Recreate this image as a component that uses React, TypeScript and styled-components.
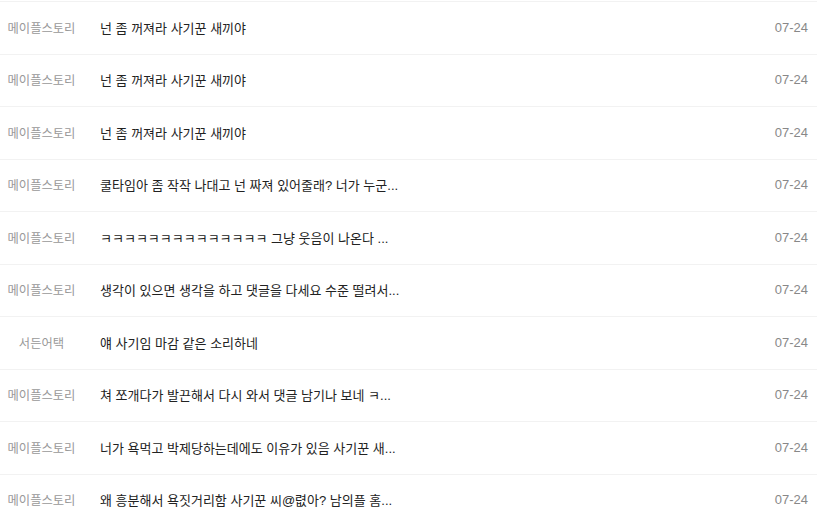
import * as React from 'react';
import styled, { createGlobalStyle } from 'styled-components';

const GlobalStyle = createGlobalStyle`
  html, body {
    margin: 0;
    padding: 0;
    background: #ffffff;
  }
  body {
    font-family: "Liberation Sans", "Noto Sans CJK KR", sans-serif;
  }
`;

const List = styled.ul`
  list-style: none;
  margin: 0;
  padding: 1px 0 0;
`;

const Row = styled.li`
  display: flex;
  align-items: center;
  height: 52.5px;
  box-sizing: border-box;
  border-top: 1px solid #f2f2f2;
  padding: 0 9px 1px 0;
  font-size: 13px;
`;

const Category = styled.span`
  flex: 0 0 83px;
  text-align: center;
  color: #999999;
  font-size: 12.3px;
  margin-right: 17px;
  padding-top: 1px;
  white-space: nowrap;
`;

const Title = styled.span`
  flex: 1;
  color: #222222;
  white-space: nowrap;
  overflow: hidden;
`;

const DateText = styled.span`
  color: #888888;
  font-size: 13px;
`;

const posts = [
  { cat: '메이플스토리', title: '넌 좀 꺼져라 사기꾼 새끼야' },
  { cat: '메이플스토리', title: '넌 좀 꺼져라 사기꾼 새끼야' },
  { cat: '메이플스토리', title: '넌 좀 꺼져라 사기꾼 새끼야' },
  { cat: '메이플스토리', title: '쿨타임아 좀 작작 나대고 넌 짜져 있어줄래? 너가 누군...' },
  { cat: '메이플스토리', title: 'ㅋㅋㅋㅋㅋㅋㅋㅋㅋㅋㅋㅋㅋㅋ 그냥 웃음이 나온다 ...' },
  { cat: '메이플스토리', title: '생각이 있으면 생각을 하고 댓글을 다세요 수준 떨려서...' },
  { cat: '서든어택', title: '얘 사기임 마감 같은 소리하네' },
  { cat: '메이플스토리', title: '쳐 쪼개다가 발끈해서 다시 와서 댓글 남기나 보네 ㅋ...' },
  { cat: '메이플스토리', title: '너가 욕먹고 박제당하는데에도 이유가 있음 사기꾼 새...' },
  { cat: '메이플스토리', title: '왜 흥분해서 욕짓거리함 사기꾼 씨@렶아? 남의플 홈...' },
];

const App: React.FC = () => {
  return (
    <>
      <GlobalStyle />
      <List>
        {posts.map((p, i) => (
          <Row key={i}>
            <Category>{p.cat}</Category>
            <Title>{p.title}</Title>
            <DateText>07-24</DateText>
          </Row>
        ))}
      </List>
    </>
  );
};

export default App;
